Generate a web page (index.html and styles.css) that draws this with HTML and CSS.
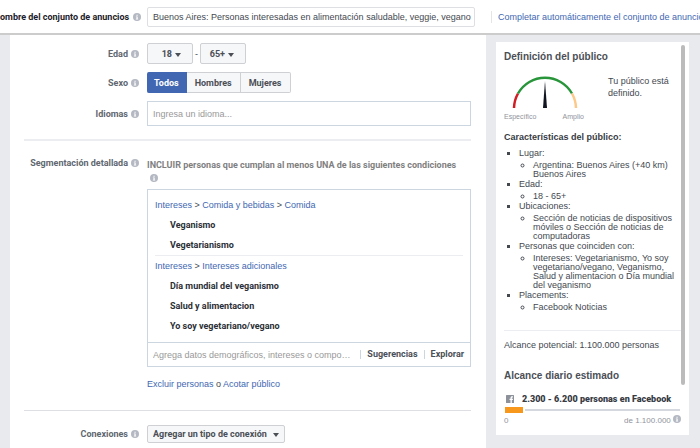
FILE: index.html
```html
<!DOCTYPE html>
<html lang="es">
<head>
    <meta charset="utf-8">
    <title>Conjunto de anuncios</title>
    <link rel="stylesheet" href="styles.css">
</head>
<body>
    <!-- shared icons -->
    <svg width="0" height="0" class="sprite">
        <symbol id="info" viewBox="0 0 14 14">
            <circle cx="7" cy="7" r="7" fill="#b4b8c2"/>
            <path d="M6 3h2.2v1.8H6zM5 6h3.2v4H9v1.2H5V10h1V7.2H5z" fill="#fff"/>
        </symbol>
    </svg>

    <header class="topbar">
        <label class="topbar-label" for="adsetName">ombre del conjunto de anuncios <svg class="info"><use href="#info"/></svg></label>
        <input class="topbar-input" type="text" id="adsetName" value="Buenos Aires: Personas interesadas en alimentación saludable, veggie, vegano">
        <div class="topbar-link"><a href="#">Completar automáticamente el conjunto de anuncios</a></div>
    </header>

    <div class="page">
        <main class="panel">
            <section class="section">
                <div class="row">
                    <label class="row-label" for="ageMin">Edad <svg class="info"><use href="#info"/></svg></label>
                    <div class="age">
                        <span class="select age-select"><select id="ageMin"><option>18</option></select></span>
                        <span>-</span>
                        <span class="select age-select"><select id="ageMax" aria-label="Edad máxima"><option>65+</option></select></span>
                    </div>
                </div>
                <div class="row">
                    <span class="row-label" id="genderLabel">Sexo <svg class="info"><use href="#info"/></svg></span>
                    <div class="segmented" role="group" aria-labelledby="genderLabel">
                        <button type="button" class="active">Todos</button>
                        <button type="button">Hombres</button>
                        <button type="button">Mujeres</button>
                    </div>
                </div>
                <div class="row">
                    <label class="row-label" for="languages">Idiomas <svg class="info"><use href="#info"/></svg></label>
                    <input class="text-input" type="text" id="languages" placeholder="Ingresa un idioma...">
                </div>
            </section>

            <section class="section targeting">
                <div class="row row-top">
                    <label class="row-label" for="interests">Segmentación detallada <svg class="info"><use href="#info"/></svg></label>
                    <div>
                        <p class="include">INCLUIR personas que cumplan al menos UNA de las siguientes condiciones <svg class="info"><use href="#info"/></svg></p>
                        <div class="interests">
                            <div class="interest-list">
                                <div class="group">
                                    <div class="crumbs"><a href="#">Intereses</a> &gt; <a href="#">Comida y bebidas</a> &gt; <a href="#">Comida</a></div>
                                    <ul>
                                        <li>Veganismo</li>
                                        <li>Vegetarianismo</li>
                                    </ul>
                                </div>
                                <div class="group">
                                    <div class="crumbs"><a href="#">Intereses</a> &gt; <a href="#">Intereses adicionales</a></div>
                                    <ul>
                                        <li>Día mundial del veganismo</li>
                                        <li>Salud y alimentacion</li>
                                        <li>Yo soy vegetariano/vegano</li>
                                    </ul>
                                </div>
                            </div>
                            <div class="interest-search">
                                <input type="text" id="interests" placeholder="Agrega datos demográficos, intereses o comportamientos">
                                <button type="button">Sugerencias</button>
                                <button type="button">Explorar</button>
                            </div>
                        </div>
                        <p class="narrow"><a href="#">Excluir personas</a> o <a href="#">Acotar público</a></p>
                    </div>
                </div>
            </section>

            <section class="section connections">
                <div class="row">
                    <label class="row-label" for="connections">Conexiones <svg class="info"><use href="#info"/></svg></label>
                    <div><span class="select connection-select"><select id="connections"><option>Agregar un tipo de conexión</option></select></span></div>
                </div>
            </section>
        </main>

        <aside class="card">
            <div class="card-body">
                <h2>Definición del público</h2>
                <div class="definition">
                    <div class="gauge">
                        <svg viewBox="0 0 66 34" class="dial">
                            <path d="M2 33 A31 31 0 0 1 6 18.500" fill="none" stroke="#cf1f25" stroke-width="2.500"/>
                            <path d="M6 18.500 A31 31 0 0 1 60 18.500" fill="none" stroke="#28953b" stroke-width="2.500"/>
                            <path d="M60 18.500 A31 31 0 0 1 64 33" fill="none" stroke="#fdc98a" stroke-width="2.500"/>
                            <path d="M33 6 L35 33 H31 Z" fill="#10151f"/>
                        </svg>
                        <div class="gauge-labels"><span>Específico</span><span>Amplio</span></div>
                    </div>
                    <p>Tu público está definido.</p>
                </div>

                <h3>Características del público:</h3>
                <ul class="traits">
                    <li>Lugar:
                        <ul><li>Argentina: Buenos Aires (+40 km) Buenos Aires</li></ul>
                    </li>
                    <li>Edad:
                        <ul><li>18 - 65+</li></ul>
                    </li>
                    <li>Ubicaciones:
                        <ul><li>Sección de noticias de dispositivos móviles o Sección de noticias de computadoras</li></ul>
                    </li>
                    <li>Personas que coinciden con:
                        <ul><li>Intereses: Vegetarianismo, Yo soy vegetariano/vegano, Veganismo, Salud y alimentacion o Día mundial del veganismo</li></ul>
                    </li>
                    <li>Placements:
                        <ul><li>Facebook Noticias</li></ul>
                    </li>
                </ul>

                <p class="potential">Alcance potencial: 1.100.000 personas</p>

                <h2>Alcance diario estimado</h2>
                <div class="reach">
                    <svg viewBox="0 0 16 16" class="fb">
                        <rect width="16" height="16" rx="1" fill="#8d919a"/>
                        <path d="M9 16V10H7V7.500h2V6c0-2.300 1.200-3.500 3.200-3.500H14V5h-1.300C11.800 5 11.600 5.400 11.600 6.200V7.500H14L13.700 10h-2.100v6z" fill="#fff"/>
                    </svg>
                    <strong>2.300 - 6.200 personas en Facebook</strong>
                </div>
                <div class="bar"><div class="bar-fill" style="width: 10%"></div><div class="bar-rest"></div></div>
                <div class="bar-labels"><span>0</span><span>de 1.100.000 <svg class="info"><use href="#info"/></svg></span></div>
            </div>
            <div class="scroll"><div class="thumb"></div></div>
        </aside>
    </div>
</body>
</html>
```
FILE: styles.css
```css
* {
    box-sizing: border-box;
}
body {
    margin: 0;
    min-height: 100vh;
    display: flex;
    flex-direction: column;
    overflow: hidden;
    background: #e9eaed;
    color: #444950;
    font: 9px/12px "Liberation Sans", Arial, sans-serif;
}
h2, h3, p, ul {
    margin: 0;
    padding: 0;
}
a {
    color: #4267b2;
    text-decoration: none;
}
input, select, button {
    font: inherit;
    color: inherit;
    margin: 0;
}
.sprite {
    position: absolute;
}
.info {
    width: 8px;
    height: 8px;
    flex: none;
}
.topbar-label,
.row-label,
.include,
.group ul,
.select select,
.segmented button,
.interest-search button,
.reach {
    font-family: Roboto, "Liberation Sans", Arial, sans-serif;
    font-weight: bold;
}

/* top bar */
.topbar {
    display: flex;
    align-items: center;
    height: 35px;
    flex: none;
    background: #fff;
    border-bottom: 2px solid #ccc;
    overflow: hidden;
}
.topbar-label {
    display: flex;
    align-items: center;
    justify-content: space-between;
    width: 141px;
    flex: none;
    margin-right: 6px;
    color: #1d2129;
    white-space: nowrap;
}
.topbar-input {
    width: 328px;
    height: 20px;
    flex: none;
    padding: 0 0 0 5px;
    border: 1px solid #dddfe2;
    border-radius: 2px;
    background: #fff;
}
.topbar-link {
    margin-left: 16px;
    padding-left: 6px;
    border-left: 1px solid #e5e5e5;
    white-space: nowrap;
}

/* form panel */
.page {
    display: flex;
    flex: 1;
    align-items: flex-start;
    padding: 0 11px 0 10px;
}
.panel {
    flex: 1;
    align-self: stretch;
    margin-right: 10px;
    padding: 0 15px 0 14px;
    background: #fff;
}
.section {
    display: grid;
    gap: 8px;
    padding: 8px 0 13px;
}
.targeting {
    padding: 16px 0 20px;
    border-top: 2px solid #ebedf0;
}
.connections {
    padding: 14px 0 6px;
    border-top: 1px solid #dddfe2;
}
.row {
    display: grid;
    grid-template-columns: 115px 1fr;
    gap: 8px;
    align-items: center;
}
.row-top {
    align-items: start;
}
.row-label {
    display: flex;
    justify-content: flex-end;
    align-items: center;
    gap: 3px;
    color: #616770;
    white-space: nowrap;
}
.age {
    display: flex;
    align-items: center;
    gap: 2px;
}
.select {
    position: relative;
    display: inline-block;
    vertical-align: top;
}
.select select {
    appearance: none;
    width: 100%;
    height: 100%;
    border: 1px solid #ced0d4;
    border-radius: 2px;
    background: #f6f7f9;
    color: #4b4f56;
}
.select::after {
    content: "";
    position: absolute;
    top: calc(50% - 1px);
    right: 12px;
    border: 3px solid transparent;
    border-top: 4px solid #4b4f56;
    border-bottom: 0;
    pointer-events: none;
}
.age-select {
    width: 46px;
    height: 21px;
}
.age-select select {
    padding: 0 20px 0 8px;
    text-align: right;
}
.segmented {
    display: flex;
}
.segmented button {
    height: 21px;
    padding: 0 8px;
    border: 1px solid #ced0d4;
    border-left: 0;
    background: #f6f7f9;
    color: #4b4f56;
}
.segmented button:last-child {
    border-radius: 0 2px 2px 0;
}
.segmented .active {
    padding: 0 7px;
    background: #4267b2;
    border-color: #4267b2;
    border-radius: 2px 0 0 2px;
    color: #fff;
}
.text-input {
    width: 100%;
    height: 25px;
    padding: 0 5px;
    border: 1px solid #ccd6e0;
    background: #fff;
}
::placeholder {
    color: #999;
    opacity: 1;
}

/* detailed targeting */
.include {
    padding-top: 2px;
    color: #7f7f7f;
}
.include .info {
    margin: 0 3px;
    vertical-align: middle;
}
.interests {
    margin-top: 6px;
    border: 1px solid #ccd6e0;
}
.interest-list {
    padding: 5px 7px 6px;
}
.group + .group {
    border-top: 1px solid #ebedf0;
}
.crumbs {
    line-height: 20px;
}
.group ul {
    list-style: none;
    padding-left: 15px;
    color: #2b2f36;
    line-height: 20px;
}
.interest-search {
    display: flex;
    align-items: center;
    height: 24px;
    padding: 0 6px 0 5px;
    border-top: 1px solid #ccd6e0;
}
.interest-search input {
    flex: 1;
    min-width: 0;
    padding: 0;
    margin-right: 8px;
    border: 0;
    background: none;
    text-overflow: ellipsis;
}
.interest-search button {
    padding: 0 0 0 6px;
    border: 0;
    border-left: 1px solid #ccd6e0;
    background: none;
    color: #4b4f56;
    line-height: 9px;
}
.interest-search button + button {
    margin-left: 6px;
}
.narrow {
    margin-top: 11px;
}
.connection-select {
    width: 138px;
    height: 18px;
}
.connection-select::after {
    right: 6px;
}
.connection-select select {
    padding: 0 5px;
}

/* audience card */
.card {
    display: flex;
    width: 193px;
    flex: none;
    margin-top: 7px;
    padding: 3px 4px 8px 8px;
    background: #fff;
}
.card-body {
    flex: 1;
    padding-top: 5px;
}
.scroll {
    width: 4px;
}
.thumb {
    height: 340px;
    border-radius: 2px;
    background: #bbb;
}
.card h2 {
    font-size: 10px;
    line-height: 14px;
    color: #4b4f56;
}
.definition {
    display: flex;
    justify-content: space-between;
    margin-top: 11px;
}
.gauge {
    width: 80px;
}
.dial {
    display: block;
    width: 66px;
    height: 34px;
    margin: 0 0 2px 8px;
}
.gauge-labels {
    display: flex;
    justify-content: space-between;
    color: #90949c;
    font-size: 7px;
}
.definition p {
    width: 73px;
}
.card h3 {
    margin: 7px 0 5px;
    font-size: 9px;
    line-height: 14px;
    color: #373b44;
}
.traits {
    padding-left: 15px;
    list-style: square;
    line-height: 9px;
}
.traits ul {
    padding: 3px 0 1px 14px;
    list-style: circle;
}
.potential {
    margin: 17px 0 18px;
    padding-top: 8px;
    border-top: 1px solid #ebedf0;
}
.reach {
    display: flex;
    align-items: center;
    gap: 8px;
    margin: 10px 0 2px 2px;
    color: #373b44;
}
.fb {
    width: 8px;
    height: 8px;
}
.bar {
    display: flex;
    align-items: center;
    gap: 2px;
    padding: 0 1px;
}
.bar-fill {
    height: 6px;
    background: #f7981c;
}
.bar-rest {
    flex: 1;
    height: 2px;
    background: #d5d8de;
}
.bar-labels {
    display: flex;
    justify-content: space-between;
    margin-top: 2px;
    color: #90949c;
    font-size: 8px;
}
```
